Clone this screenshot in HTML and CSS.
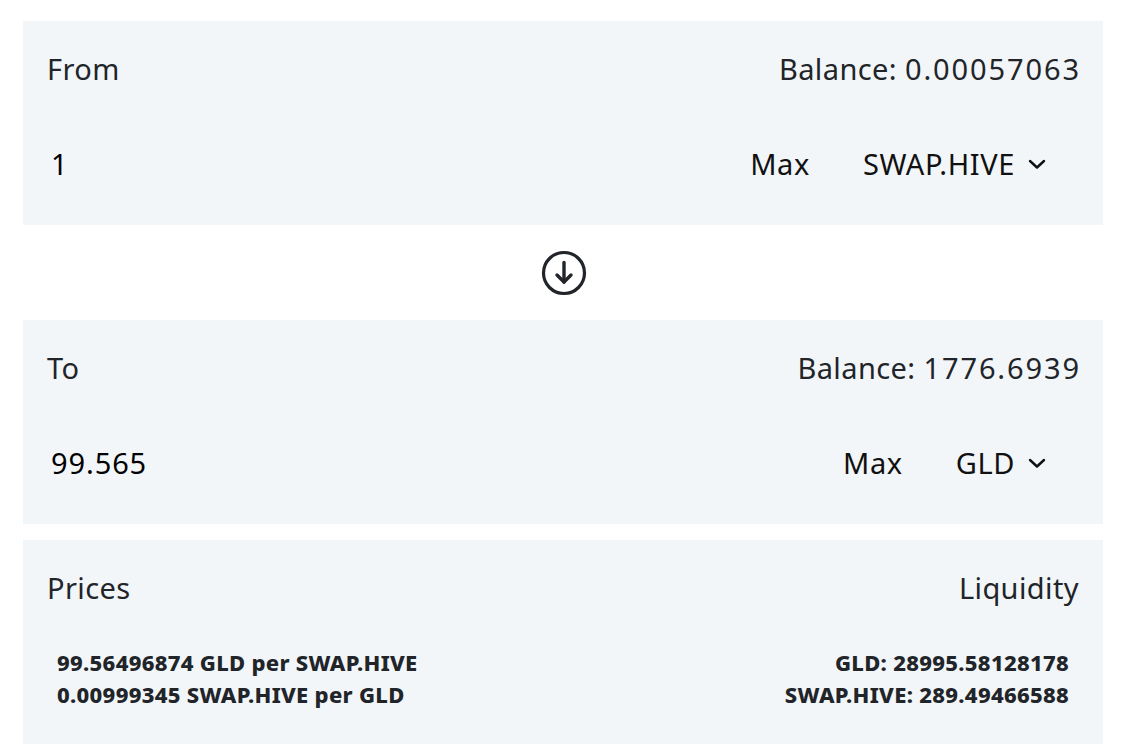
FILE: index.html
```html
<!DOCTYPE html>
<html>
<head>
<meta charset="utf-8">
<link rel="stylesheet" href="styles.css">
</head>
<body>
<div class="swap">
  <section class="panel">
    <div class="head">
      <span class="label">From</span>
      <span class="label">Balance: <span class="num">0.00057063</span></span>
    </div>
    <div class="row">
      <input class="amount" type="text" value="1">
      <button class="max">Max</button>
      <button class="token">SWAP.HIVE
        <svg class="chev" width="18" height="12" viewBox="0 0 18 12"><path d="M2 3 L9 9.5 L16 3" fill="none" stroke="#111" stroke-width="2.4" stroke-linecap="round" stroke-linejoin="round"/></svg>
      </button>
    </div>
  </section>
  <div class="switch">
    <svg width="46" height="46" viewBox="0 0 46 46">
      <circle cx="23" cy="23" r="20.5" fill="none" stroke="#212529" stroke-width="3.2"/>
      <path d="M23 12.5 V32" fill="none" stroke="#212529" stroke-width="3.4" stroke-linecap="round"/>
      <path d="M16 25 L23 32 L30 25" fill="none" stroke="#212529" stroke-width="3.4" stroke-linecap="round" stroke-linejoin="round"/>
    </svg>
  </div>
  <section class="panel">
    <div class="head">
      <span class="label">To</span>
      <span class="label">Balance: <span class="num">1776.6939</span></span>
    </div>
    <div class="row">
      <input class="amount" type="text" value="99.565">
      <button class="max">Max</button>
      <button class="token">GLD
        <svg class="chev" width="18" height="12" viewBox="0 0 18 12"><path d="M2 3 L9 9.5 L16 3" fill="none" stroke="#111" stroke-width="2.4" stroke-linecap="round" stroke-linejoin="round"/></svg>
      </button>
    </div>
  </section>
  <section class="panel info">
    <div class="head">
      <span class="label">Prices</span>
      <span class="label">Liquidity</span>
    </div>
    <div class="stats">
      <div class="col">
        <div>99.56496874 GLD per SWAP.HIVE</div>
        <div>0.00999345 SWAP.HIVE per GLD</div>
      </div>
      <div class="col right">
        <div>GLD: 28995.58128178</div>
        <div>SWAP.HIVE: 289.49466588</div>
      </div>
    </div>
  </section>
</div>
</body>
</html>
```

FILE: styles.css
```css
* { box-sizing: border-box; }
html, body { margin: 0; padding: 0; background: #fff; }
body {
  font-family: "Noto Sans", "Open Sans", sans-serif;
  color: #212529;
}
.swap {
  width: 1080px;
  margin: 21px 0 0 23px;
  display: flex;
  flex-direction: column;
}
.panel {
  background: #f3f6f9;
  height: 204px;
  padding: 24px 24px 0 24px;
  display: flex;
  flex-direction: column;
}
.head {
  height: 48px;
  display: flex;
  justify-content: space-between;
  align-items: center;
}
.label {
  font-size: 29px;
  line-height: 48px;
  font-weight: 400;
  letter-spacing: 0.4px;
  white-space: nowrap;
}
.num { letter-spacing: 1.9px; margin-right: -2px; }
.row {
  margin-top: 40px;
  height: 60px;
  display: flex;
  align-items: center;
}
.amount {
  flex: 1;
  border: none;
  background: transparent;
  font-family: inherit;
  font-size: 29px;
  letter-spacing: 0.9px;
  color: #000;
  padding: 0 0 0 4px;
  outline: none;
  height: 60px;
}
.max, .token {
  border: none;
  background: transparent;
  font-family: inherit;
  font-size: 29px;
  letter-spacing: 0.6px;
  color: #111;
  padding: 0;
  display: flex;
  align-items: center;
  height: 60px;
  white-space: nowrap;
}
.max { margin-right: 53px; }
.token { margin-right: 33px; }
.chev { margin-left: 13px; margin-top: 2px; }
.switch {
  height: 95px;
  display: flex;
  justify-content: center;
  align-items: center;
}
.switch svg { margin-left: 1px; margin-top: 1px; }
.info { margin-top: 16px; }
.stats {
  margin-top: 34px;
  display: flex;
  justify-content: space-between;
  padding: 0 10px;
  font-weight: 800;
  font-size: 22px;
  letter-spacing: 0.3px;
  line-height: 32px;
}
.right { text-align: right; }
```
